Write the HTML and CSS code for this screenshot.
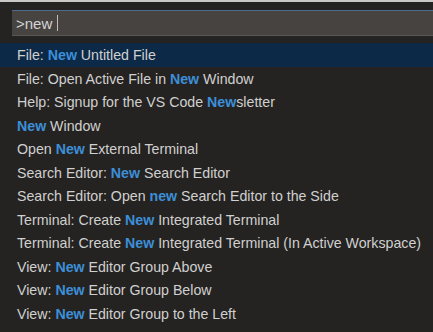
FILE: index.html
```html
<!DOCTYPE html>
<html lang="en">
<head>
    <meta charset="UTF-8">
    <title>Command Palette</title>
    <link rel="stylesheet" href="styles.css">
</head>
<body>
    <div class="palette">
        <div class="input-row">
            <div class="input-box">
                <span class="query">&gt;new</span><span class="caret"></span>
            </div>
        </div>
        <ul class="results">
            <li class="item selected">File: <b>New</b> Untitled File</li>
            <li class="item">File: Open Active File in <b>New</b> Window</li>
            <li class="item">Help: Signup for the VS Code <b>New</b>sletter</li>
            <li class="item"><b>New</b> Window</li>
            <li class="item">Open <b>New</b> External Terminal</li>
            <li class="item">Search Editor: <b>New</b> Search Editor</li>
            <li class="item">Search Editor: Open <b>new</b> Search Editor to the Side</li>
            <li class="item">Terminal: Create <b>New</b> Integrated Terminal</li>
            <li class="item">Terminal: Create <b>New</b> Integrated Terminal (In Active Workspace)</li>
            <li class="item">View: <b>New</b> Editor Group Above</li>
            <li class="item">View: <b>New</b> Editor Group Below</li>
            <li class="item">View: <b>New</b> Editor Group to the Left</li>
        </ul>
    </div>
</body>
</html>
```

FILE: styles.css
```css
body {
    margin: 0;
    background-color: #252321;
    font-family: "Liberation Sans", Arial, sans-serif;
    overflow: hidden;
}

.palette {
    height: 332px;
    border-top: 2px solid #c9c9c9;
    box-sizing: border-box;
}

.input-row {
    padding: 8px 0 7px 12px;
}

.input-box {
    height: 26px;
    box-sizing: border-box;
    background-color: #474341;
    border-top: 1px solid #4e6a8e;
    border-bottom: 1px solid #5a5755;
    display: flex;
    align-items: center;
    padding-left: 4px;
    font-size: 15px;
    color: #d4d4d4;
}

.caret {
    display: inline-block;
    width: 1px;
    height: 16px;
    margin-left: 5px;
    background-color: #bdbdbd;
}

.results {
    list-style: none;
    margin: 0;
    padding: 0;
}

.item {
    height: 23.5px;
    line-height: 25px;
    padding-left: 17px;
    font-size: 14.2px;
    color: #d0d0d0;
    white-space: nowrap;
}

.item b {
    color: #3c8fd8;
    font-weight: bold;
}

.selected {
    background-color: #0c2a47;
}
```
